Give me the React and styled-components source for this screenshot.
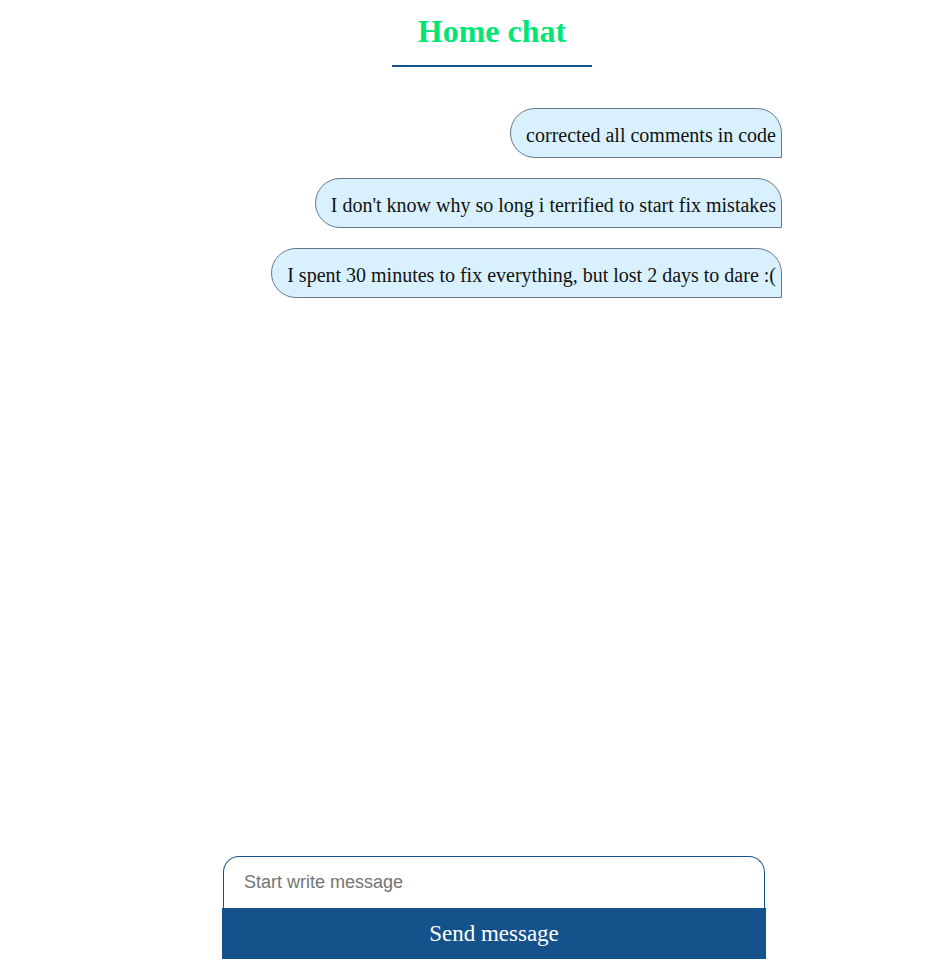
import React from "react";
import styled, { createGlobalStyle } from "styled-components";

const Global = createGlobalStyle`
  html, body { margin: 0; padding: 0; background: #fff; }
  body { font-family: "Liberation Serif", serif; }
`;

const Page = styled.div`
  width: 580px;
  margin-left: 202px;
  min-height: 100vh;
  display: flex;
  flex-direction: column;
  box-sizing: border-box;
  padding-bottom: 20px;
`;

const Header = styled.header`
  display: flex;
  flex-direction: column;
  align-items: center;
`;

const Title = styled.h1`
  margin: 13px 0 0;
  font-family: "Liberation Serif", serif;
  font-size: 32px;
  line-height: 37px;
  font-weight: 700;
  color: #00e676;
`;

const Underline = styled.div`
  width: 200px;
  height: 2px;
  margin-top: 15px;
  background: #15528c;
`;

const Messages = styled.div`
  flex: 1;
  display: flex;
  flex-direction: column;
  align-items: flex-end;
  gap: 20px;
  padding-top: 41px;
`;

const Bubble = styled.div`
  box-sizing: border-box;
  height: 50px;
  display: flex;
  align-items: center;
  padding: 4px 5px 0 15px;
  background: #d9f1fe;
  border: 1px solid #66788a;
  border-radius: 25px 25px 0 25px;
  font-family: "Liberation Serif", serif;
  font-size: 20px;
  color: #111;
`;

const Composer = styled.form`
  width: 544px;
  margin-left: 20px;
  display: flex;
  flex-direction: column;
`;

const Input = styled.input`
  box-sizing: border-box;
  width: 542px;
  height: 52px;
  margin: 0 auto;
  padding: 0 20px;
  border: 1px solid #15528c;
  border-bottom: none;
  border-radius: 16px 16px 0 0;
  font-family: "Liberation Sans", Arial, sans-serif;
  font-size: 18px;
  outline: none;
  &::placeholder { color: #757575; }
`;

const SendButton = styled.button`
  width: 544px;
  height: 51px;
  border: none;
  background: #15528c;
  color: #fff;
  font-family: "Liberation Serif", serif;
  font-size: 23px;
  padding: 0;
  cursor: pointer;
`;

const messages = [
  "corrected all comments in code",
  "I don't know why so long i terrified to start fix mistakes",
  "I spent 30 minutes to fix everything, but lost 2 days to dare :(",
];

export default function App() {
  return (
    <>
      <Global />
      <Page>
        <Header>
          <Title>Home chat</Title>
          <Underline />
        </Header>
        <Messages>
          {messages.map((m, i) => (
            <Bubble key={i}>{m}</Bubble>
          ))}
        </Messages>
        <Composer onSubmit={(e) => e.preventDefault()}>
          <Input placeholder="Start write message" />
          <SendButton type="submit">Send message</SendButton>
        </Composer>
      </Page>
    </>
  );
}
